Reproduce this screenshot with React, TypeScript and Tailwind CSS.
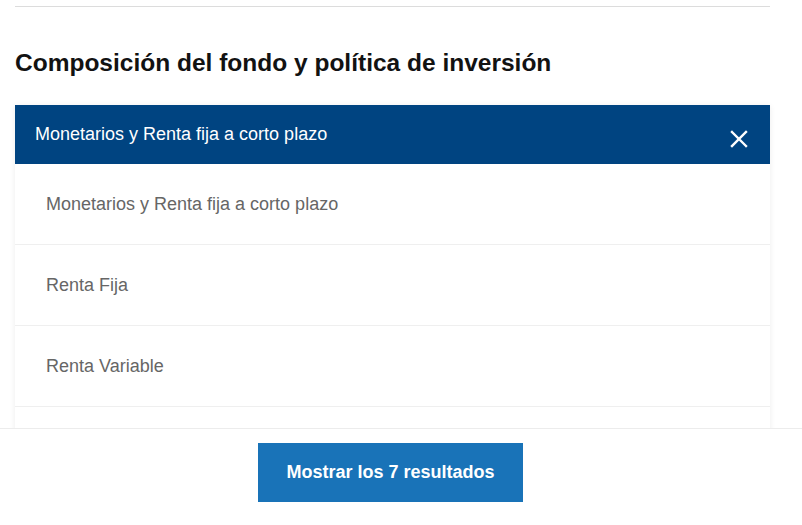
const options = ["Monetarios y Renta fija a corto plazo", "Renta Fija", "Renta Variable", ""]

export default function App() {
  return (
    <div className="w-[802px] h-[525px] flex flex-col bg-white overflow-hidden font-['Liberation_Sans',Arial,sans-serif]">
      <div className="h-[428px] overflow-hidden px-[15px] pr-[32px]">
        <div className="mt-[6px] border-t border-[#dcdcdc]" />
        <h2 className="mt-[40px] text-[24.5px] font-semibold text-[#121212] leading-[32px]">
          Composición del fondo y política de inversión
        </h2>
        <div className="mt-[26px] shadow-[0_1px_6px_rgba(0,0,0,0.08)]">
          <div className="h-[59px] bg-[#004481] flex items-center justify-between pl-[20px] pr-[22px]">
            <span className="text-white text-[18px]">Monetarios y Renta fija a corto plazo</span>
            <svg width="18" height="18" viewBox="0 0 18 18" className="mt-[8px]">
              <path d="M2 2 L16 16 M16 2 L2 16" stroke="white" strokeWidth="2.4" strokeLinecap="square" />
            </svg>
          </div>
          <ul>
            {options.map((o, i) => (
              <li key={i} className="h-[81px] flex items-center pl-[31px] border-b border-[#efefef] text-[18px] text-[#666666]">
                {o}
              </li>
            ))}
          </ul>
        </div>
      </div>
      <div className="flex-1 border-t border-[#ececec] flex justify-start pl-[258px] pt-[14px]">
        <button className="w-[265px] h-[59px] bg-[#1973b8] text-white text-[18px] font-semibold">
          Mostrar los 7 resultados
        </button>
      </div>
    </div>
  )
}
